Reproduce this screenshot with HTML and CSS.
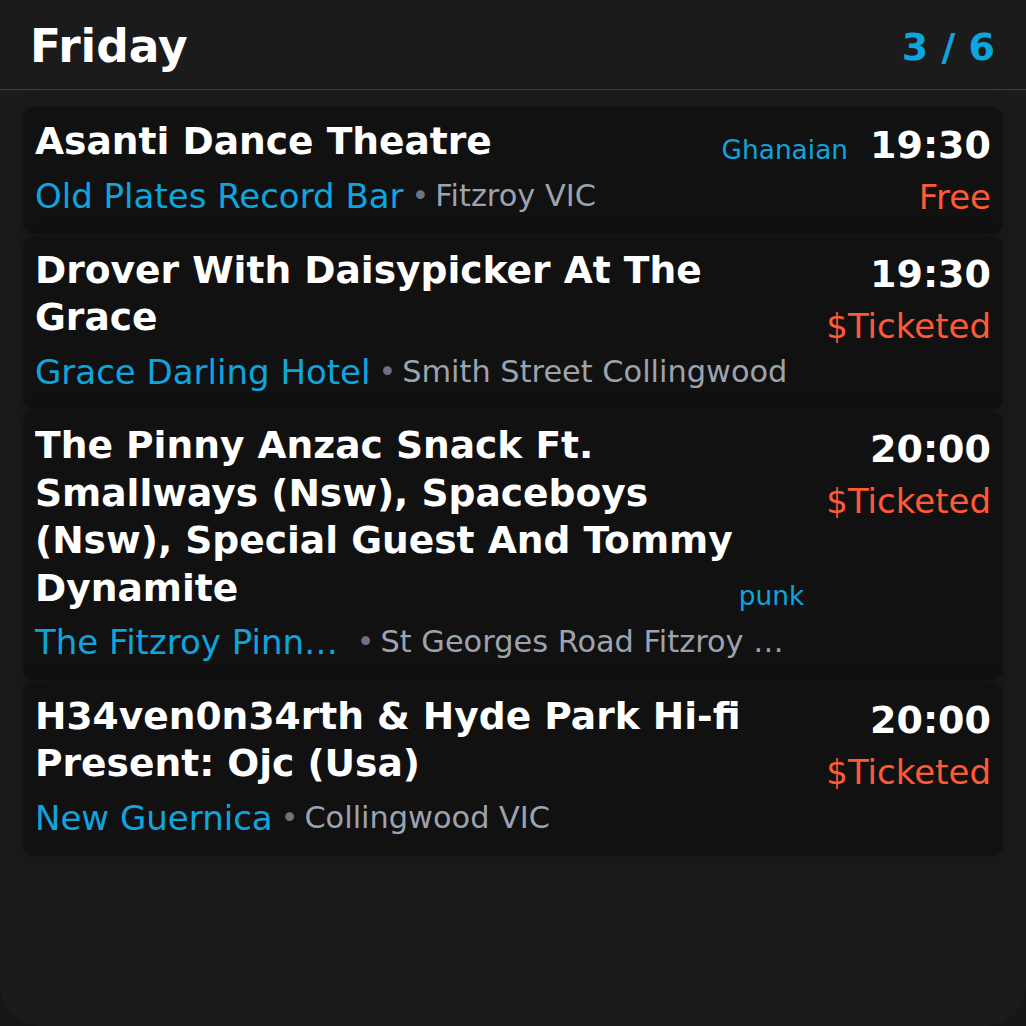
FILE: index.html
```html
<!DOCTYPE html>
<html lang="en">
<head>
<meta charset="utf-8">
<title>Friday</title>
<link rel="stylesheet" href="styles.css">
</head>
<body>
<div class="app">
  <header class="header">
    <h1 class="day">Friday</h1>
    <div class="count">3 / 6</div>
  </header>
  <div class="list">
    <div class="card">
      <div class="main">
        <div class="title-row">
          <div class="title">Asanti Dance Theatre</div>
          <div class="tag">Ghanaian</div>
        </div>
        <div class="meta">
          <span class="venue">Old Plates Record Bar</span>
          <span class="sep">•</span>
          <span class="addr">Fitzroy VIC</span>
        </div>
      </div>
      <div class="side">
        <div class="time">19:30</div>
        <div class="price">Free</div>
      </div>
    </div>
    <div class="card">
      <div class="main">
        <div class="title-row">
          <div class="title">Drover With Daisypicker At The Grace</div>
        </div>
        <div class="meta">
          <span class="venue">Grace Darling Hotel</span>
          <span class="sep">•</span>
          <span class="addr">Smith Street Collingwood</span>
        </div>
      </div>
      <div class="side">
        <div class="time">19:30</div>
        <div class="price">$Ticketed</div>
      </div>
    </div>
    <div class="card">
      <div class="main">
        <div class="title-row">
          <div class="title">The Pinny Anzac Snack Ft. Smallways (Nsw), Spaceboys (Nsw), Special Guest And Tommy Dynamite</div>
          <div class="tag">punk</div>
        </div>
        <div class="meta">
          <span class="venue">The Fitzroy Pinnacle</span>
          <span class="sep">•</span>
          <span class="addr">St Georges Road Fitzroy North</span>
        </div>
      </div>
      <div class="side">
        <div class="time">20:00</div>
        <div class="price">$Ticketed</div>
      </div>
    </div>
    <div class="card">
      <div class="main">
        <div class="title-row">
          <div class="title">H34ven0n34rth &amp; Hyde Park Hi-fi Present: Ojc (Usa)</div>
        </div>
        <div class="meta">
          <span class="venue">New Guernica</span>
          <span class="sep">•</span>
          <span class="addr">Collingwood VIC</span>
        </div>
      </div>
      <div class="side">
        <div class="time">20:00</div>
        <div class="price">$Ticketed</div>
      </div>
    </div>
  </div>
</div>
</body>
</html>
```
FILE: styles.css
```css
* {
  box-sizing: border-box;
}

html, body {
  margin: 0;
  padding: 0;
  background: #161616;
}

body {
  font-family: "DejaVu Sans", "Noto Sans", sans-serif;
  color: #ffffff;
}

.app {
  width: 1026px;
  height: 1026px;
  background: #1b1b1b;
  border-radius: 0 0 40px 40px;
  overflow: hidden;
}

.header {
  height: 90px;
  padding: 4px 31px 0 30px;
  display: flex;
  align-items: center;
  justify-content: space-between;
  border-bottom: 1px solid #3a404b;
}

.day {
  margin: 0;
  font-size: 45.5px;
  font-weight: 700;
  line-height: normal;
  color: #ffffff;
}

.count {
  font-size: 38px;
  font-weight: 700;
  color: #0ea5de;
}

.list {
  display: flex;
  flex-direction: column;
  gap: 1.5px;
  padding: 17px 23px 0;
}

.card {
  display: flex;
  gap: 22px;
  padding: 11px 12px 18px;
  background: #111111;
  border-radius: 12px;
  box-shadow: 0 2px 18px rgba(0, 0, 0, 0.28);
}

.main {
  flex: 1;
  min-width: 0;
}

.title-row {
  display: flex;
  align-items: flex-end;
}

.title {
  flex: 1;
  min-width: 0;
  font-size: 37.6px;
  font-weight: 700;
  line-height: 47.5px;
  color: #ffffff;
}

.tag {
  flex: none;
  margin-left: 2px;
  font-size: 26.4px;
  line-height: 33px;
  color: #0ea5de;
  white-space: nowrap;
}

.meta {
  display: flex;
  align-items: center;
  height: 40px;
  margin-top: 10px;
  line-height: 40px;
  white-space: nowrap;
}

.venue {
  flex: 0 1 auto;
  min-width: 0;
  overflow: hidden;
  text-overflow: ellipsis;
  font-size: 34px;
  color: #0ea5de;
}

.sep {
  flex: none;
  margin: 0 6px 0 8px;
  font-size: 30px;
  color: #6b7280;
}

.addr {
  flex: 0 1 auto;
  min-width: 0;
  overflow: hidden;
  text-overflow: ellipsis;
  font-size: 30.4px;
  color: #9ca3af;
}

.side {
  flex: none;
  text-align: right;
}

.time {
  margin-top: 4px;
  font-size: 38px;
  font-weight: 700;
  line-height: 46px;
  color: #ffffff;
}

.price {
  margin-top: 10px;
  font-size: 34px;
  line-height: 38px;
  color: #ff5a36;
}
```
